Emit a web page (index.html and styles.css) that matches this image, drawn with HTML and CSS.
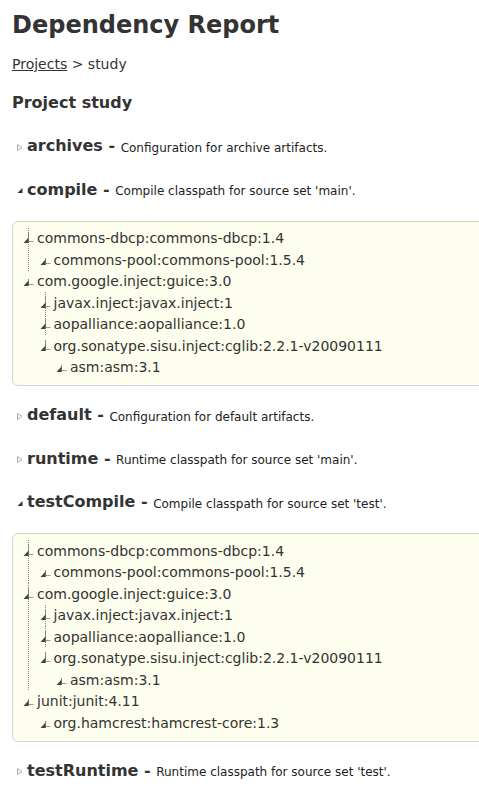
FILE: index.html
```html
<!DOCTYPE html>
<html>
<head>
<meta charset="utf-8">
<title>Dependency Report</title>
<link rel="stylesheet" href="styles.css">
</head>
<body>
<div class="page">
  <h1 class="title">Dependency Report</h1>
  <div class="breadcrumbs"><a href="#">Projects</a> &gt; study</div>
  <h2 class="project">Project study</h2>

  <h3 class="config"><svg class="tog" width="8" height="9" viewBox="0 0 8 9"><path d="M1.5 1.5 L6 4.5 L1.5 7.5 Z" fill="none" stroke="#aaa"/></svg><span class="name">archives - </span><span class="desc">Configuration for archive artifacts.</span></h3>

  <h3 class="config"><svg class="tog" width="8" height="9" viewBox="0 0 8 9"><path d="M6.5 2 L6.5 7 L1.5 7 Z" fill="#333"/></svg><span class="name">compile - </span><span class="desc">Compile classpath for source set 'main'.</span></h3>
  <div class="box">
    <ul class="tree">
      <li class="more"><div class="row"><svg class="leaf" width="12" height="12" viewBox="0 0 12 12"><path d="M6.5 0v11" stroke="#888"/><path d="M6.5 9.5h5" stroke="#999"/><path d="M1.5 11 L6.5 5.5 L6.5 11Z" fill="#444"/></svg>commons-dbcp:commons-dbcp:1.4</div>
        <ul class="tree">
          <li><div class="row"><svg class="leaf" width="12" height="12" viewBox="0 0 12 12"><path d="M6.5 4v7" stroke="#888"/><path d="M6.5 9.5h5" stroke="#999"/><path d="M1.5 11 L6.5 5.5 L6.5 11Z" fill="#444"/></svg>commons-pool:commons-pool:1.5.4</div></li>
        </ul>
      </li>
      <li><div class="row"><svg class="leaf" width="12" height="12" viewBox="0 0 12 12"><path d="M6.5 4v7" stroke="#888"/><path d="M6.5 9.5h5" stroke="#999"/><path d="M1.5 11 L6.5 5.5 L6.5 11Z" fill="#444"/></svg>com.google.inject:guice:3.0</div>
        <ul class="tree">
          <li class="more"><div class="row"><svg class="leaf" width="12" height="12" viewBox="0 0 12 12"><path d="M6.5 0v11" stroke="#888"/><path d="M6.5 9.5h5" stroke="#999"/><path d="M1.5 11 L6.5 5.5 L6.5 11Z" fill="#444"/></svg>javax.inject:javax.inject:1</div></li>
          <li class="more"><div class="row"><svg class="leaf" width="12" height="12" viewBox="0 0 12 12"><path d="M6.5 0v11" stroke="#888"/><path d="M6.5 9.5h5" stroke="#999"/><path d="M1.5 11 L6.5 5.5 L6.5 11Z" fill="#444"/></svg>aopalliance:aopalliance:1.0</div></li>
          <li><div class="row"><svg class="leaf" width="12" height="12" viewBox="0 0 12 12"><path d="M6.5 0v11" stroke="#888"/><path d="M6.5 9.5h5" stroke="#999"/><path d="M1.5 11 L6.5 5.5 L6.5 11Z" fill="#444"/></svg>org.sonatype.sisu.inject:cglib:2.2.1-v20090111</div>
            <ul class="tree">
              <li><div class="row"><svg class="leaf" width="12" height="12" viewBox="0 0 12 12"><path d="M6.5 4v7" stroke="#888"/><path d="M6.5 9.5h5" stroke="#999"/><path d="M1.5 11 L6.5 5.5 L6.5 11Z" fill="#444"/></svg>asm:asm:3.1</div></li>
            </ul>
          </li>
        </ul>
      </li>
    </ul>
  </div>

  <h3 class="config"><svg class="tog" width="8" height="9" viewBox="0 0 8 9"><path d="M1.5 1.5 L6 4.5 L1.5 7.5 Z" fill="none" stroke="#aaa"/></svg><span class="name">default - </span><span class="desc">Configuration for default artifacts.</span></h3>

  <h3 class="config"><svg class="tog" width="8" height="9" viewBox="0 0 8 9"><path d="M1.5 1.5 L6 4.5 L1.5 7.5 Z" fill="none" stroke="#aaa"/></svg><span class="name">runtime - </span><span class="desc">Runtime classpath for source set 'main'.</span></h3>

  <h3 class="config"><svg class="tog" width="8" height="9" viewBox="0 0 8 9"><path d="M6.5 2 L6.5 7 L1.5 7 Z" fill="#333"/></svg><span class="name">testCompile - </span><span class="desc">Compile classpath for source set 'test'.</span></h3>
  <div class="box">
    <ul class="tree">
      <li class="more"><div class="row"><svg class="leaf" width="12" height="12" viewBox="0 0 12 12"><path d="M6.5 0v11" stroke="#888"/><path d="M6.5 9.5h5" stroke="#999"/><path d="M1.5 11 L6.5 5.5 L6.5 11Z" fill="#444"/></svg>commons-dbcp:commons-dbcp:1.4</div>
        <ul class="tree">
          <li><div class="row"><svg class="leaf" width="12" height="12" viewBox="0 0 12 12"><path d="M6.5 4v7" stroke="#888"/><path d="M6.5 9.5h5" stroke="#999"/><path d="M1.5 11 L6.5 5.5 L6.5 11Z" fill="#444"/></svg>commons-pool:commons-pool:1.5.4</div></li>
        </ul>
      </li>
      <li class="more"><div class="row"><svg class="leaf" width="12" height="12" viewBox="0 0 12 12"><path d="M6.5 0v11" stroke="#888"/><path d="M6.5 9.5h5" stroke="#999"/><path d="M1.5 11 L6.5 5.5 L6.5 11Z" fill="#444"/></svg>com.google.inject:guice:3.0</div>
        <ul class="tree">
          <li class="more"><div class="row"><svg class="leaf" width="12" height="12" viewBox="0 0 12 12"><path d="M6.5 0v11" stroke="#888"/><path d="M6.5 9.5h5" stroke="#999"/><path d="M1.5 11 L6.5 5.5 L6.5 11Z" fill="#444"/></svg>javax.inject:javax.inject:1</div></li>
          <li class="more"><div class="row"><svg class="leaf" width="12" height="12" viewBox="0 0 12 12"><path d="M6.5 0v11" stroke="#888"/><path d="M6.5 9.5h5" stroke="#999"/><path d="M1.5 11 L6.5 5.5 L6.5 11Z" fill="#444"/></svg>aopalliance:aopalliance:1.0</div></li>
          <li><div class="row"><svg class="leaf" width="12" height="12" viewBox="0 0 12 12"><path d="M6.5 0v11" stroke="#888"/><path d="M6.5 9.5h5" stroke="#999"/><path d="M1.5 11 L6.5 5.5 L6.5 11Z" fill="#444"/></svg>org.sonatype.sisu.inject:cglib:2.2.1-v20090111</div>
            <ul class="tree">
              <li><div class="row"><svg class="leaf" width="12" height="12" viewBox="0 0 12 12"><path d="M6.5 4v7" stroke="#888"/><path d="M6.5 9.5h5" stroke="#999"/><path d="M1.5 11 L6.5 5.5 L6.5 11Z" fill="#444"/></svg>asm:asm:3.1</div></li>
            </ul>
          </li>
        </ul>
      </li>
      <li><div class="row"><svg class="leaf" width="12" height="12" viewBox="0 0 12 12"><path d="M6.5 4v7" stroke="#888"/><path d="M6.5 9.5h5" stroke="#999"/><path d="M1.5 11 L6.5 5.5 L6.5 11Z" fill="#444"/></svg>junit:junit:4.11</div>
        <ul class="tree">
          <li><div class="row"><svg class="leaf" width="12" height="12" viewBox="0 0 12 12"><path d="M6.5 4v7" stroke="#888"/><path d="M6.5 9.5h5" stroke="#999"/><path d="M1.5 11 L6.5 5.5 L6.5 11Z" fill="#444"/></svg>org.hamcrest:hamcrest-core:1.3</div></li>
        </ul>
      </li>
    </ul>
  </div>

  <h3 class="config"><svg class="tog" width="8" height="9" viewBox="0 0 8 9"><path d="M1.5 1.5 L6 4.5 L1.5 7.5 Z" fill="none" stroke="#aaa"/></svg><span class="name">testRuntime - </span><span class="desc">Runtime classpath for source set 'test'.</span></h3>
</div>
</body>
</html>
```

FILE: styles.css
```css
html, body {
  margin: 0;
  padding: 0;
  background: #ffffff;
  overflow: hidden;
}
body {
  font-family: "DejaVu Sans", Verdana, sans-serif;
  color: #333333;
}
.page {
  padding: 10px 0 0 12px;
}
.title {
  margin: 0;
  font-size: 24px;
  line-height: 30px;
  font-weight: bold;
}
.breadcrumbs {
  margin-top: 14px;
  font-size: 14px;
  line-height: 20px;
}
.breadcrumbs a {
  color: #333333;
  text-decoration: underline;
}
.project {
  margin: 18px 0 0;
  font-size: 16px;
  line-height: 22px;
  font-weight: bold;
}
.config {
  margin: 21.5px 0 0;
  display: flex;
  align-items: center;
  height: 22px;
  line-height: 22px;
  font-weight: bold;
}
.project + .config {
  margin-top: 21px;
}
.box + .config {
  margin-top: 18px;
}
.tog {
  flex: none;
  margin: 2px 3px 0 4px;
}
.name {
  font-size: 16px;
  white-space: pre;
}
.desc {
  font-size: 12px;
  font-weight: normal;
  color: #222222;
  white-space: pre;
  padding-top: 3px;
}
.box {
  margin: 20px -40px 0 0;
  padding: 6px 0 7px 9px;
  border: 1px solid #d4d4d4;
  border-radius: 6px;
  background: #fefeee;
}
.tree {
  list-style: none;
  margin: 0;
  padding: 0;
}
.tree .tree {
  margin-left: 16.5px;
}
.tree li {
  margin: 0;
  padding: 0;
}
.tree li.more {
  background-image: repeating-linear-gradient(to bottom, #888 0, #888 1px, transparent 1px, transparent 2px);
  background-size: 1px 100%;
  background-repeat: no-repeat;
  background-position: 6px 0;
}
.row {
  display: flex;
  align-items: center;
  height: 21.5px;
  font-size: 14px;
  white-space: nowrap;
}
.leaf {
  flex: none;
  margin: 0 3px 0 0;
}
```
